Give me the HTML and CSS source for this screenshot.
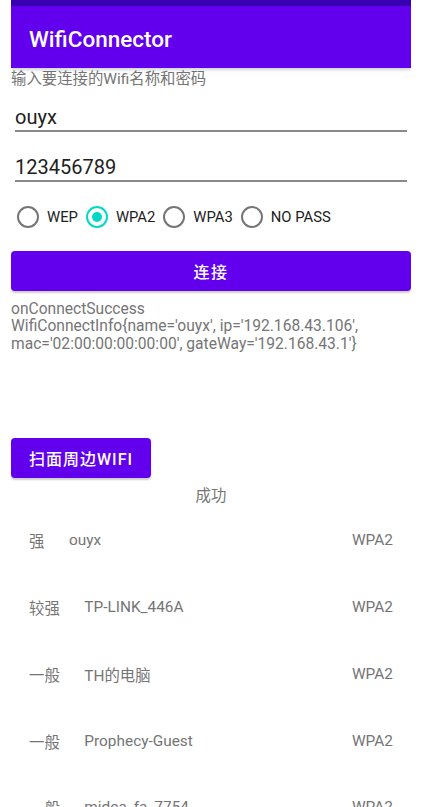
FILE: index.html
```html
<!DOCTYPE html>
<html>
<head>
<meta charset="utf-8">
<link rel="stylesheet" href="styles.css">
</head>
<body>
<div class="screen">
  <div class="status"></div>
  <div class="appbar"><span class="title">WifiConnector</span></div>
  <div class="hint">输入要连接的Wifi名称和密码</div>
  <div class="edit edit1">ouyx</div>
  <div class="edit edit2">123456789</div>
  <div class="radios">
    <div class="radio"><span class="circle"></span><span class="label">WEP</span></div>
    <div class="radio checked"><span class="circle"></span><span class="label">WPA2</span></div>
    <div class="radio"><span class="circle"></span><span class="label">WPA3</span></div>
    <div class="radio"><span class="circle"></span><span class="label">NO PASS</span></div>
  </div>
  <div class="btn btn-connect">连接</div>
  <div class="result">onConnectSuccess<br>WifiConnectInfo{name='ouyx', ip='192.168.43.106',<br>mac='02:00:00:00:00:00', gateWay='192.168.43.1'}</div>
  <div class="btn btn-scan">扫面周边WIFI</div>
  <div class="status-text">成功</div>
  <div class="list">
    <div class="row"><span class="level">强</span><span class="name">ouyx</span><span class="sec">WPA2</span></div>
    <div class="row"><span class="level">较强</span><span class="name">TP-LINK_446A</span><span class="sec">WPA2</span></div>
    <div class="row"><span class="level">一般</span><span class="name">TH的电脑</span><span class="sec">WPA2</span></div>
    <div class="row"><span class="level">一般</span><span class="name">Prophecy-Guest</span><span class="sec">WPA2</span></div>
    <div class="row"><span class="level">一般</span><span class="name">midea_fa_7754</span><span class="sec">WPA2</span></div>
  </div>
</div>
</body>
</html>
```
FILE: styles.css
```css
html, body {
  margin: 0;
  padding: 0;
  background: #ffffff;
  overflow: hidden;
}
body {
  font-family: Roboto, "Noto Sans CJK SC", sans-serif;
}
.screen {
  margin-left: 11px;
  width: 400px;
  height: 807px;
  overflow: hidden;
}
.status {
  height: 6px;
  background: #3700B3;
}
.appbar {
  height: 62px;
  background: #6200EE;
  display: flex;
  align-items: center;
  padding-left: 18px;
  box-shadow: 0 2px 3px rgba(0,0,0,0.18);
  position: relative;
}
.title {
  color: #ffffff;
  font-size: 22.5px;
  font-weight: 500;
  margin-top: 4px;
}
.hint {
  margin-top: 2px;
  font-size: 15.4px;
  line-height: 18px;
  color: #757575;
}
.edit {
  margin: 0 4px;
  font-size: 20px;
  line-height: 24px;
  color: #212121;
  border-bottom: 2px solid #8a8a8a;
  padding-bottom: 1.5px;
}
.edit1 { padding-top: 16.5px; }
.edit2 { padding-top: 22.5px; }
.radios {
  display: flex;
  align-items: center;
  height: 32px;
  margin-top: 19px;
}
.radio {
  display: flex;
  align-items: center;
  padding-left: 6px;
  padding-right: 2px;
}
.circle {
  width: 22px;
  height: 22px;
  box-sizing: border-box;
  border: 2px solid #757575;
  border-radius: 50%;
  margin-right: 8px;
  display: flex;
  align-items: center;
  justify-content: center;
}
.checked .circle {
  border-color: #03DAC5;
}
.checked .circle::after {
  content: "";
  width: 10px;
  height: 10px;
  border-radius: 50%;
  background: #03DAC5;
}
.label {
  font-size: 14.8px;
  color: #212121;
}
.btn {
  background: #6200EE;
  color: #ffffff;
  height: 40px;
  border-radius: 4px;
  display: flex;
  align-items: center;
  justify-content: center;
  font-size: 16px;
  font-weight: 500;
  letter-spacing: 1px;
  box-shadow: 0 2px 2px rgba(0,0,0,0.2);
}
.btn-connect {
  margin-top: 17.5px;
  letter-spacing: 1.5px;
}
.result {
  margin-top: 10px;
  font-size: 15.6px;
  line-height: 17.7px;
  color: #757575;
}
.btn-scan {
  margin-top: 84px;
  width: 140px;
}
.status-text {
  margin-top: 9.5px;
  text-align: center;
  font-size: 15.4px;
  line-height: 18px;
  color: #757575;
}
.list {
  margin-top: 2px;
}
.row {
  height: 66.7px;
  display: flex;
  align-items: center;
  padding: 0 18px;
  font-size: 15.4px;
  color: #757575;
}
.level {
  margin-right: 24.5px;
}
.name {
  flex: 1;
}
```
